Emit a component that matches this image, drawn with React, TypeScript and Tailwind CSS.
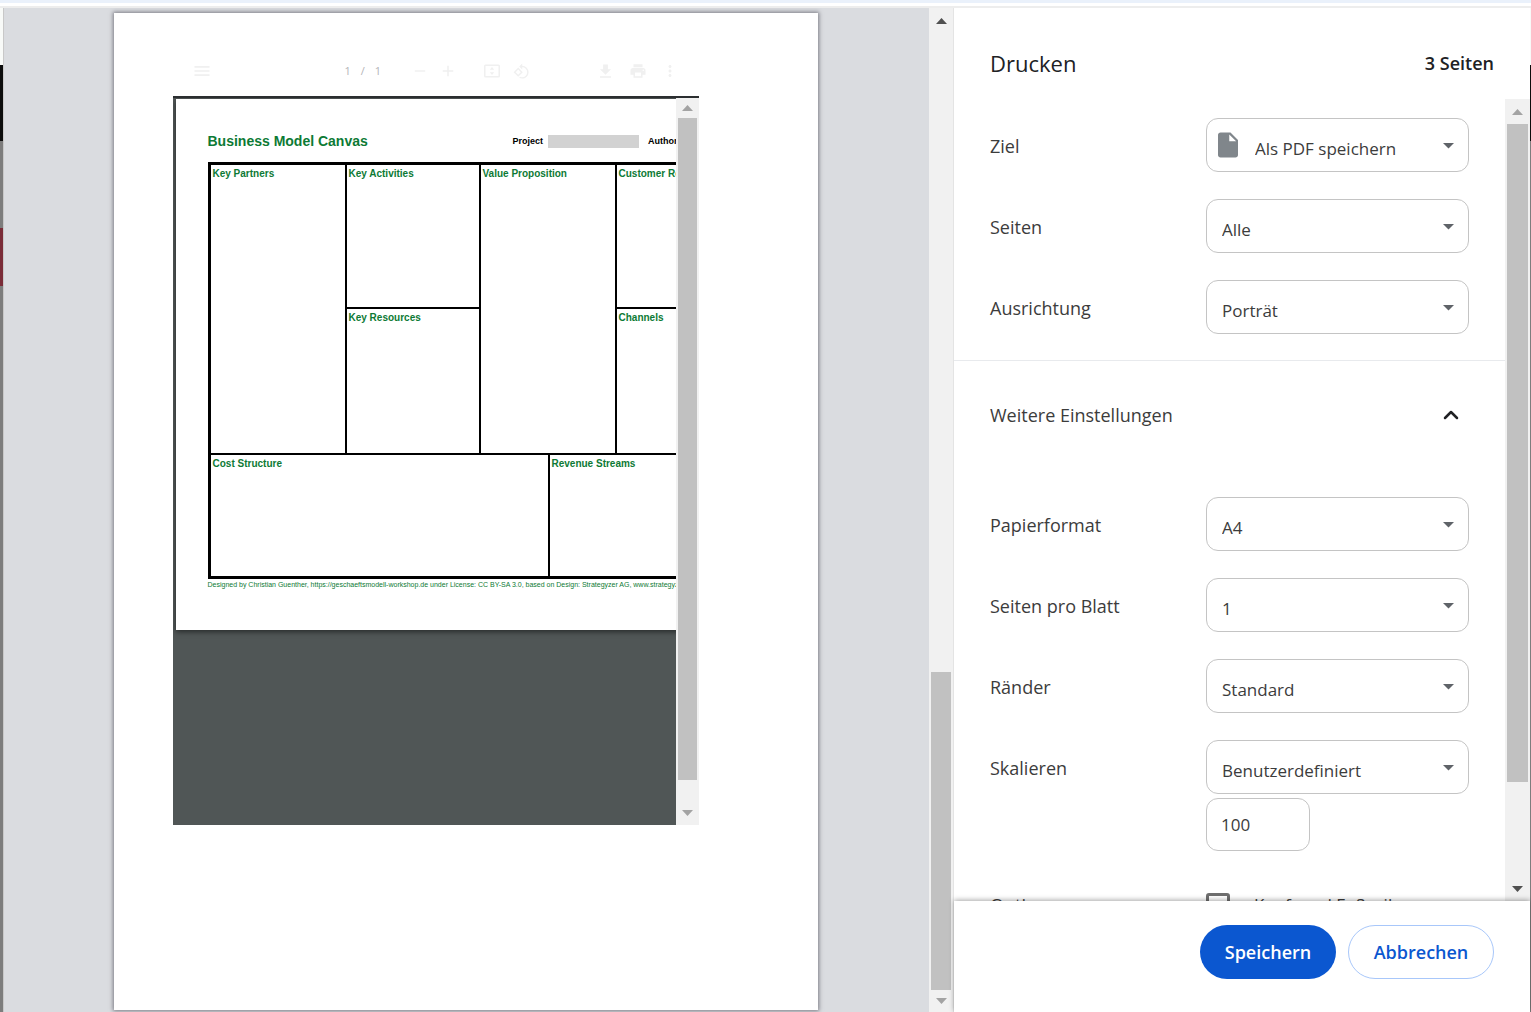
import { ReactNode, useState } from 'react';
import { ChevronUp } from 'lucide-react';
import clsx from 'clsx';
import {
  MdAdd,
  MdGetApp,
  MdInsertDriveFile,
  MdMenu,
  MdMoreVert,
  MdPrint,
  MdRemove,
  MdRotate90DegreesCcw,
} from 'react-icons/md';

interface ScrollbarProps {
  className?: string;
  thumbClassName: string;
  atEnd?: boolean;
  upClassName: string;
  downClassName: string;
}

function Scrollbar({ className, thumbClassName, atEnd, upClassName, downClassName }: ScrollbarProps) {
  return (
    <div className={clsx('flex shrink-0 flex-col bg-[#f1f1f1]', className)} aria-hidden="true">
      <div className={clsx('flex shrink-0 items-center justify-center', upClassName)}>
        <svg width="11" height="6" viewBox="0 0 11 6" fill="currentColor">
          <path d="M0 6L5.5 0L11 6Z" />
        </svg>
      </div>
      <div className={clsx('flex min-h-0 flex-1 flex-col', atEnd && 'justify-end')}>
        <div className={clsx('mx-0.5 bg-[#c1c1c1]', thumbClassName)} />
      </div>
      <div className={clsx('flex shrink-0 items-center justify-center', downClassName)}>
        <svg width="11" height="6" viewBox="0 0 11 6" fill="currentColor">
          <path d="M0 0L5.5 6L11 0Z" />
        </svg>
      </div>
    </div>
  );
}

function FitPageIcon() {
  return (
    <svg width="18" height="18" viewBox="0 0 18 18" fill="currentColor">
      <path
        fillRule="evenodd"
        d="M2.500 2.500H15.500Q17 2.500 17 4V14Q17 15.500 15.500 15.500H2.500Q1 15.500 1 14V4Q1 2.500 2.500 2.500ZM2.500 4V14H15.500V4Z"
      />
      <path d="M9 5L11.200 7.800H6.800ZM9 13L6.800 10.200H11.200Z" />
    </svg>
  );
}

function ViewerToolbar() {
  return (
    <div className="flex h-[50px] w-[526px] items-center pl-[19px] pr-5 text-[#f0f0f0]">
      <MdMenu size={20} />
      <div className="ml-[133px] flex gap-2.5 text-[11px] text-[#b4b4b8]">
        <span>1</span>
        <span>/</span>
        <span>1</span>
      </div>
      <div className="ml-[30px] flex items-center gap-2.5">
        <MdRemove size={18} />
        <MdAdd size={18} />
      </div>
      <div className="ml-[26px] flex items-center gap-3">
        <FitPageIcon />
        <MdRotate90DegreesCcw size={17} />
      </div>
      <div className="ml-auto flex items-center gap-3.5">
        <MdGetApp size={19} />
        <MdPrint size={18} />
        <MdMoreVert size={18} />
      </div>
    </div>
  );
}

function Cell({ title, className }: { title: string; className?: string }) {
  return (
    <div
      className={clsx(
        'shrink-0 border-black pl-0.5 pt-[3px] text-[10px] font-bold leading-3 text-[#0d7a35]',
        className
      )}
    >
      {title}
    </div>
  );
}

function ModelCanvas() {
  return (
    <div className="h-[531px] w-[740px] bg-white pl-8 pt-[34px] font-['Liberation_Sans',sans-serif] shadow-[0_2px_5px_rgba(0,0,0,0.5)]">
      <div className="flex h-[29px] items-start">
        <h2 className="w-[305px] shrink-0 text-[14px] font-bold leading-4 text-[#0d7a35]">
          Business Model Canvas
        </h2>
        <div className="flex items-center text-[9px] font-bold leading-4">
          <span>Project</span>
          <span className="ml-[5px] mr-[9px] h-[13px] w-[91px] bg-[#d2d2d2]" />
          <span>Author</span>
        </div>
      </div>
      <div className="w-[682px] border-[3px] border-black">
        <div className="flex h-[290px] border-b-2 border-black">
          <Cell title="Key Partners" className="w-[136px] border-r-2" />
          <div className="flex w-[134px] flex-col border-r-2 border-black">
            <Cell title="Key Activities" className="h-36 border-b-2" />
            <Cell title="Key Resources" />
          </div>
          <Cell title="Value Proposition" className="w-[136px] border-r-2" />
          <div className="flex w-[136px] flex-col border-r-2 border-black">
            <Cell title="Customer Relationships" className="h-36 whitespace-nowrap border-b-2" />
            <Cell title="Channels" />
          </div>
        </div>
        <div className="flex h-[121px]">
          <Cell title="Cost Structure" className="w-[339px] border-r-2" />
          <Cell title="Revenue Streams" />
        </div>
      </div>
      <p className="mt-0.5 whitespace-nowrap text-[7px] leading-[8px] text-[#0d7a35]">
        Designed by Christian Guenther, https://geschaeftsmodell-workshop.de under License: CC BY-SA 3.0,
        based on Design: Strategyzer AG, www.strategyzer.com
      </p>
    </div>
  );
}

function Preview() {
  return (
    <section className="flex min-w-0 flex-1 bg-[#dadce0]">
      <div className="min-w-0 flex-1 overflow-hidden pr-0.5 pt-[5px]">
        <div className="mx-auto h-[997px] w-[704px] bg-white px-[59px] pt-[33px] shadow-[0_0_4px_1px_rgba(60,60,70,0.6)]">
          <ViewerToolbar />
          <div className="flex h-[729px] w-[526px] border-t-2 border-[#2b2e30] bg-[#505656]">
            <div className="min-w-0 flex-1 overflow-hidden pl-[3px] pt-px">
              <ModelCanvas />
            </div>
            <Scrollbar
              className="w-[23px]"
              thumbClassName="h-[97%]"
              upClassName="h-5 text-[#a3a3a3]"
              downClassName="h-[25px] text-[#a3a3a3]"
            />
          </div>
        </div>
      </div>
      <Scrollbar
        className="w-[25px] border-r border-[#e4e4e4]"
        thumbClassName="h-[318px]"
        atEnd
        upClassName="h-[25px] text-[#505050]"
        downClassName="h-[22px] text-[#a3a3a3]"
      />
    </section>
  );
}

interface SelectRowProps {
  id: string;
  label: string;
  options: string[];
  icon?: ReactNode;
  children?: ReactNode;
}

function SelectRow({ id, label, options, icon, children }: SelectRowProps) {
  return (
    <div className="flex justify-between pb-[14px] pt-[13px]">
      <label htmlFor={id} className="h-[54px] text-[18px] leading-[56px] text-[#3c3c3c]">
        {label}
      </label>
      <div className="w-[263px]">
        <div className="relative">
          {icon}
          <select
            id={id}
            className={clsx(
              'h-[54px] w-full appearance-none rounded-xl border border-[#c4c4c4] bg-transparent pr-10 pt-2 text-[17px] text-[#3c3c3c]',
              icon ? 'pl-12' : 'pl-[15px]'
            )}
          >
            {options.map((option) => (
              <option key={option}>{option}</option>
            ))}
          </select>
          <svg
            className="pointer-events-none absolute right-[15px] top-[25px] text-[#5f6368]"
            width="11"
            height="6"
            viewBox="0 0 11 6"
            fill="currentColor"
          >
            <path d="M0 0H11L5.500 5.500Z" />
          </svg>
        </div>
        {children}
      </div>
    </div>
  );
}

function Settings() {
  const [scale, setScale] = useState('100');
  const [headers, setHeaders] = useState(false);

  return (
    <section className="flex w-[576px] shrink-0 flex-col bg-white">
      <header className="flex h-[91px] shrink-0 items-start justify-between px-9 pt-[39px] leading-8 text-[#202124]">
        <h1 className="text-[22px]">Drucken</h1>
        <span className="text-[18px] font-semibold">3 Seiten</span>
      </header>

      <div className="flex min-h-0 flex-1">
        <div className="min-w-0 flex-1 overflow-hidden pt-1.5">
          <div className="px-9">
            <SelectRow
              id="destination"
              label="Ziel"
              options={['Als PDF speichern']}
              icon={
                <MdInsertDriveFile
                  size={30}
                  className="pointer-events-none absolute left-[7px] top-3 text-[#80868b]"
                />
              }
            />
            <SelectRow id="pages" label="Seiten" options={['Alle']} />
            <SelectRow id="layout" label="Ausrichtung" options={['Porträt']} />
          </div>
          <hr className="mt-3 border-[#e8eaed]" />
          <button
            type="button"
            className="mb-[13px] flex h-[110px] w-full items-center justify-between pb-0.5 pl-9 pr-[42px] text-[18px] text-[#3c3c3c]"
          >
            Weitere Einstellungen
            <ChevronUp size={24} strokeWidth={2.5} className="text-[#202124]" />
          </button>
          <div className="px-9">
            <SelectRow id="paper" label="Papierformat" options={['A4']} />
            <SelectRow id="per-sheet" label="Seiten pro Blatt" options={['1']} />
            <SelectRow id="margins" label="Ränder" options={['Standard']} />
            <SelectRow id="scaling" label="Skalieren" options={['Benutzerdefiniert']}>
              <input
                type="text"
                aria-label="Skalieren"
                value={scale}
                onChange={(e) => setScale(e.target.value)}
                className="mt-1 h-[53px] w-[104px] rounded-xl border border-[#c4c4c4] px-[14px] text-[17px] text-[#3c3c3c]"
              />
            </SelectRow>
            <div className="flex justify-between pt-7 leading-6 text-[#3c3c3c]">
              <span className="text-[18px]">Optionen</span>
              <label className="flex w-[263px] items-start text-[17px]">
                <input
                  type="checkbox"
                  checked={headers}
                  onChange={(e) => setHeaders(e.target.checked)}
                  className="h-6 w-6 appearance-none rounded-[3px] border-[3px] border-[#6e6e6e]"
                />
                <span className="ml-6 whitespace-nowrap">Kopf- und Fußzeilen</span>
              </label>
            </div>
          </div>
        </div>
        <Scrollbar
          className="w-[25px]"
          thumbClassName="h-7/8"
          upClassName="h-[25px] text-[#a3a3a3]"
          downClassName="h-[25px] text-[#505050]"
        />
      </div>

      <footer className="z-10 flex h-[111px] shrink-0 items-start justify-end gap-3 bg-white pr-9 pt-6 shadow-[0_-1px_5px_rgba(0,0,0,0.35)]">
        <button
          type="button"
          className="h-[54px] w-[136px] rounded-full bg-[#0b57d0] text-[18px] font-semibold text-white"
        >
          Speichern
        </button>
        <button
          type="button"
          className="h-[54px] w-[146px] rounded-full border border-[#a8c7fa] bg-white text-[18px] font-semibold text-[#0b57d0]"
        >
          Abbrechen
        </button>
      </footer>
    </section>
  );
}

// Slices of the page that stay visible beside the dialog
function Backdrop({ className, accentClassName }: { className: string; accentClassName: string }) {
  return (
    <div className={clsx('flex shrink-0 flex-col', className)} aria-hidden="true">
      <div className="h-[57px] bg-[#f8faf8]" />
      <div className="h-[76px] bg-[#0c0c0c]" />
      <div className="h-[87px] bg-[#7d7d7d]" />
      <div className={clsx('h-[58px]', accentClassName)} />
      <div className="flex-1 bg-[#7d7d7d]" />
    </div>
  );
}

export default function App() {
  return (
    <div className="flex h-screen flex-col overflow-hidden bg-white font-['Open_Sans','Noto_Sans',sans-serif]">
      <div className="h-[3px] shrink-0 bg-[#eaf1fb]" />
      <div className="mt-[3px] h-0.5 shrink-0 bg-[#ededed]" />
      <main className="flex min-h-0 flex-1">
        <Backdrop className="w-[3px]" accentClassName="bg-[#7a2c38]" />
        <div className="w-px shrink-0 bg-[#c8c8c8]" />
        <Preview />
        <Settings />
        <Backdrop className="w-px" accentClassName="bg-[#7d7d7d]" />
      </main>
    </div>
  );
}
